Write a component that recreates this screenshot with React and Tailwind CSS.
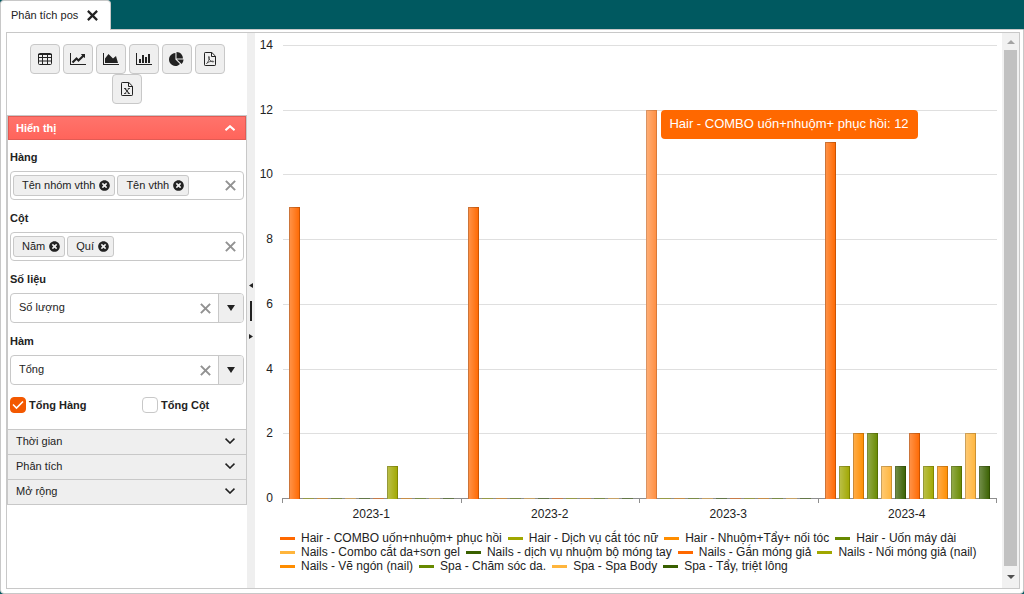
import { useState } from 'react';
import { FaTimesCircle } from 'react-icons/fa';

const SERIES = [
  { name: 'Hair - COMBO uốn+nhuộm+ phục hồi', color: '#ff6800', values: [9, 9, 12, 11] },
  { name: 'Hair - Dịch vụ cắt tóc nữ', color: '#a0a700', values: [0, 0, 0, 1] },
  { name: 'Hair - Nhuộm+Tẩy+ nối tóc', color: '#ff8d00', values: [0, 0, 0, 2] },
  { name: 'Hair - Uốn máy dài', color: '#678900', values: [0, 0, 0, 2] },
  { name: 'Nails - Combo cắt da+sơn gel', color: '#ffb53c', values: [0, 0, 0, 1] },
  { name: 'Nails - dịch vụ nhuộm bộ móng tay', color: '#396000', values: [0, 0, 0, 1] },
  { name: 'Nails - Gắn móng giả', color: '#ff6800', values: [0, 0, 0, 2] },
  { name: 'Nails - Nối móng giả (nail)', color: '#a0a700', values: [1, 0, 0, 1] },
  { name: 'Nails - Vẽ ngón (nail)', color: '#ff8d00', values: [0, 0, 0, 1] },
  { name: 'Spa - Chăm sóc da.', color: '#678900', values: [0, 0, 0, 1] },
  { name: 'Spa - Spa Body', color: '#ffb53c', values: [0, 0, 0, 2] },
  { name: 'Spa - Tẩy, triệt lông', color: '#396000', values: [0, 0, 0, 1] },
];
const PERIODS = ['2023-1', '2023-2', '2023-3', '2023-4'];
const TICKS = [0, 2, 4, 6, 8, 10, 12, 14];

// plot area inside the svg
const LEFT = 28;
const RIGHT = 742;
const TOP = 12;
const BOTTOM = 465;
const GROUP = (RIGHT - LEFT) / PERIODS.length;
const yOf = v => Math.round(BOTTOM - (v / 14) * (BOTTOM - TOP));

const TableIcon = () => (
  <svg width="14" height="12" viewBox="0 0 14 12">
    <rect x="0.5" y="0.5" width="13" height="11" rx="1" fill="none" stroke="currentColor" />
    <path fill="none" stroke="currentColor" d="M0 1.500h14M0 4.500h14M0 8h14M4.500 1v11M9.500 1v11" />
  </svg>
);

const LineIcon = () => (
  <svg width="16" height="14" viewBox="0 0 2048 1792">
    <path fill="currentColor" d="M2048 1536v128H0V128h128v1408h1920zM1920 288v435q0 21-19.500 29.500t-35.500-7.500l-121-121-633 633q-10 10-23 10t-23-10l-233-233-416 416-192-192 585-585q10-10 23-10t23 10l233 233 464-464-121-121q-16-16-7.500-35.500t29.500-19.500h435q14 0 23 9t9 23z" />
  </svg>
);

const AreaIcon = () => (
  <svg width="16" height="14" viewBox="0 0 2048 1792">
    <path fill="currentColor" d="M2048 1536v128H0V128h128v1408h1920zM1664 512l256 896H256V832l448-576 576 576z" />
  </svg>
);

const BarIcon = () => (
  <svg width="16" height="14" viewBox="0 0 2048 1792">
    <path fill="currentColor" d="M640 896v512H384V896h256zm384-512v1024H768V384h256zm1024 1152v128H0V128h128v1408h1920zM1408 640v768h-256V640h256zm384-384v1152h-256V256h256z" />
  </svg>
);

const PieIcon = () => (
  <svg width="15" height="15" viewBox="0 0 1792 1792">
    <path fill="currentColor" d="M768 890l546 546q-106 108-247.500 168T768 1664q-209 0-385.500-103T103 1281.500 0 896t103-385.500T382.500 231 768 128v762zm187 6h773q0 157-60 298.500T1500 1442zm709-128H896V0q209 0 385.500 103T1561 382.500 1664 768z" />
  </svg>
);

const FileIcon = ({ children }) => (
  <svg width="12" height="14" viewBox="0 0 12 14" fill="none" stroke="currentColor">
    <path d="M.5 1.200a.7.7 0 0 1 .7-.7h6.600l3.700 3.700v8.600a.7.7 0 0 1-.7.7H1.200a.7.7 0 0 1-.7-.7zM7.500.5v4h4" />
    {children}
  </svg>
);

const Cross = ({ size = 11, width = 1.8 }) => (
  <svg width={size} height={size} viewBox="0 0 10 10" fill="none" stroke="currentColor" strokeWidth={width}>
    <path d="M.8.800l8.400 8.400M9.200.800L.8 9.200" />
  </svg>
);

const Chevron = ({ up }) => (
  <svg width="10" height="6" viewBox="0 0 10 6" fill="none" stroke="currentColor" strokeWidth={up ? 2 : 1.6}>
    <path d={up ? 'M.5 5.200L5 1.200l4.500 4' : 'M.5.700L5 5l4.500-4.300'} />
  </svg>
);

const TOOLS = [
  { label: 'Bảng', icon: <TableIcon /> },
  { label: 'Biểu đồ đường', icon: <LineIcon /> },
  { label: 'Biểu đồ vùng', icon: <AreaIcon /> },
  { label: 'Biểu đồ cột', icon: <BarIcon /> },
  { label: 'Biểu đồ tròn', icon: <PieIcon /> },
  {
    label: 'Xuất PDF',
    icon: (
      <FileIcon>
        <path strokeWidth="0.7" d="M2.500 11.500C4 10.500 5.300 7.500 5.300 5c0-.8-.8-.8-.7 0 .2 2.500 2 4.500 4.400 5 1 .1.900-.9-.1-.9-2 0-4.500.700-6.400 2.400z" />
      </FileIcon>
    ),
  },
  {
    label: 'Xuất Excel',
    icon: (
      <FileIcon>
        <path strokeWidth="1.200" d="M4 6.500l4 5" />
        <path strokeWidth="0.8" d="M8 6.500l-4 5M3 6.500h2.200M6.800 6.500H9M3 11.500h2.200M6.800 11.500H9" />
      </FileIcon>
    ),
  },
];

function TagField({ id, label, tags }) {
  return (
    <div>
      <label htmlFor={id} className="block h-8 pt-[10px] leading-4 font-bold">{label}</label>
      <div className="flex h-[29px] items-center gap-[2px] rounded-[4px] border border-[#c8c8c8] bg-white pl-[2px] pr-[7px]">
        {tags.map(t => (
          <span key={t} className="flex h-[21px] shrink-0 items-center gap-1 rounded-[3px] border border-[#c8c8c8] bg-[#efefef] pr-1 pb-px pl-2">
            {t}
            <button type="button" aria-label={`Bỏ ${t}`}><FaTimesCircle size={11} /></button>
          </span>
        ))}
        <input id={id} type="text" className="h-5 w-0 min-w-0 flex-1 outline-none" />
        <button type="button" aria-label="Xóa" className="text-[#929292]"><Cross /></button>
      </div>
    </div>
  );
}

function SelectField({ id, label, value }) {
  return (
    <div>
      <label htmlFor={id} className="block h-8 pt-[10px] leading-4 font-bold">{label}</label>
      <div className="flex h-[30px] items-stretch overflow-hidden rounded-[4px] border border-[#c8c8c8] bg-white">
        <select id={id} className="min-w-0 flex-1 appearance-none pb-[2px] pl-2 outline-none">
          <option>{value}</option>
        </select>
        <button type="button" aria-label="Xóa" className="px-[7px] text-[#929292]"><Cross /></button>
        <button type="button" aria-label="Mở" className="flex w-[25px] items-center justify-center border-l border-[#c8c8c8] bg-[#efefef]">
          <svg width="8" height="6" viewBox="0 0 8 6"><path fill="currentColor" d="M0 0h8L4 6z" /></svg>
        </button>
      </div>
    </div>
  );
}

function CheckField({ label, checked, onChange }) {
  return (
    <label className="flex items-center gap-[3px] font-bold">
      <span className="relative flex h-4 w-4">
        <input
          type="checkbox"
          checked={checked}
          onChange={e => onChange(e.target.checked)}
          className="h-4 w-4 appearance-none rounded-[4px] border border-[#c8c8c8] bg-white checked:border-[#f35800] checked:bg-[#f35800]"
        />
        {checked && (
          <svg className="pointer-events-none absolute inset-0" width="16" height="16" viewBox="0 0 16 16" fill="none" stroke="#fff" strokeWidth="1.600">
            <path d="M3 7.500l3.500 3.500L13 4.500" />
          </svg>
        )}
      </span>
      {label}
    </label>
  );
}

function Sidebar() {
  const [open, setOpen] = useState(true);
  const [sumRow, setSumRow] = useState(true);
  const [sumCol, setSumCol] = useState(false);

  return (
    <aside className="w-[240px] shrink-0">
      <div className="flex flex-wrap justify-center gap-x-[3px] px-4 py-[11px]">
        {TOOLS.map(t => (
          <button
            key={t.label}
            type="button"
            aria-label={t.label}
            className="flex h-[30px] w-[30px] items-center justify-center rounded-[4px] border border-[#c8c8c8] bg-[#efefef]"
          >
            {t.icon}
          </button>
        ))}
      </div>

      <div className="border border-[#c8c8c8]">
        <button
          type="button"
          onClick={() => setOpen(!open)}
          className="flex h-6 w-full items-center justify-between border border-[#e25b54] bg-linear-to-b from-[#ff736b] to-[#ff645b] pr-[10px] pb-px pl-[7px] font-bold text-white"
        >
          Hiển thị <Chevron up={open} />
        </button>
        {open && (
          <div className="-mt-px px-[2px] pb-4">
            <TagField id="rows" label="Hàng" tags={['Tên nhóm vthh', 'Tên vthh']} />
            <TagField id="cols" label="Cột" tags={['Năm', 'Quí']} />
            <SelectField id="measure" label="Số liệu" value="Số lượng" />
            <SelectField id="func" label="Hàm" value="Tổng" />
            <div className="grid grid-cols-[132px_1fr] pt-3">
              <CheckField label="Tổng Hàng" checked={sumRow} onChange={setSumRow} />
              <CheckField label="Tổng Cột" checked={sumCol} onChange={setSumCol} />
            </div>
          </div>
        )}
        {['Thời gian', 'Phân tích', 'Mở rộng'].map(s => (
          <button
            key={s}
            type="button"
            className="flex h-[25px] w-full items-center justify-between border-t border-[#c8c8c8] bg-[#efefef] pr-[11px] pb-[2px] pl-2"
          >
            {s} <Chevron />
          </button>
        ))}
      </div>
    </aside>
  );
}

function Chart() {
  return (
    <svg viewBox="0 0 747 498" className="block w-full" fontFamily="'Liberation Sans', Arial, sans-serif" fontSize="12" fill="#222">
      <defs>
        <linearGradient id="shine" x1="0" x2="1" y1="0" y2="0">
          <stop offset="0" stopColor="#fff" stopOpacity="0.3" />
          <stop offset="1" stopColor="#fff" stopOpacity="0" />
        </linearGradient>
      </defs>

      {TICKS.map(t => (
        <g key={t}>
          {t > 0 && <rect x={LEFT} y={yOf(t)} width={RIGHT - LEFT} height="1" fill="#dfdfdf" />}
          <text x="18" y={yOf(t) + 4} textAnchor="end">{t}</text>
        </g>
      ))}

      <g shapeRendering="crispEdges">
        <rect x={LEFT - 1} y={BOTTOM} width={RIGHT - LEFT + 1} height="1" fill="#8e8e8e" />
        {[0, 1, 2, 3, 4].map(i => (
          <rect key={i} x={Math.round(LEFT + i * GROUP) - 1} y={BOTTOM} width="1" height="5" fill="#8e8e8e" />
        ))}
        {PERIODS.map((p, g) =>
          SERIES.map((s, i) => {
            const x = Math.round(LEFT + g * GROUP) + 6 + i * 14;
            const v = s.values[g];
            const y = yOf(v);
            const hovered = g === 2 && i === 0;
            if (v === 0) return <rect key={p + i} x={x} y={BOTTOM} width="11" height="1" fill={s.color} opacity="0.5" />;
            return (
              <g key={p + i}>
                <rect x={x} y={y} width="11" height={BOTTOM + 1 - y} fill={s.color} />
                <rect x={x} y={y} width="11" height={BOTTOM + 1 - y} fill="url(#shine)" />
                {hovered && <rect x={x} y={y} width="11" height={BOTTOM + 1 - y} fill="#fff" opacity="0.25" />}
                <path d={`M${x + 0.5} ${BOTTOM + 1}V${y + 0.5}h10V${BOTTOM + 1}`} fill="none" stroke="#000" strokeOpacity={hovered ? 0.15 : 0.2} />
              </g>
            );
          })
        )}
      </g>

      {PERIODS.map((p, g) => (
        <text key={p} x={LEFT + (g + 0.5) * GROUP - 1} y="485" textAnchor="middle">{p}</text>
      ))}

      <rect x="406" y="77" width="257" height="29" rx="4" fill="#ff6800" />
      <text x="534" y="95" textAnchor="middle" fill="#fff" fontSize="13">Hair - COMBO uốn+nhuộm+ phục hồi: 12</text>
    </svg>
  );
}

export default function App() {
  return (
    <div className="flex min-h-screen flex-col bg-[#005960] font-['Liberation_Sans',Arial,sans-serif] text-[11px] leading-4 text-[#222]">
      <header className="flex h-[29px] items-end">
        <div className="z-10 -mb-px flex h-[30px] items-center gap-[9px] rounded-t-[4px] border border-b-0 border-[#c8c8c8] bg-white pr-3 pb-[2px] pl-[10px]">
          <a href="#pos">Phân tích pos</a>
          <button type="button" aria-label="Đóng" className="pt-px"><Cross size={11} width={2} /></button>
        </div>
      </header>

      <main className="flex flex-1 rounded-b-[4px] border border-[#c8c8c8] bg-white pt-[2px] pr-[3px] pb-1 pl-[5px]">
        <div className="flex min-w-0 flex-1 border border-[#c8c8c8]">
          <Sidebar />

          <div className="flex w-2 shrink-0 flex-col items-center justify-center gap-[13px] bg-[#efefef]">
            <svg width="4" height="5" viewBox="0 0 4 5"><path fill="#222" d="M4 0v5L0 2.500z" /></svg>
            <span className="h-5 w-[2px] bg-[#222]" />
            <svg width="4" height="5" viewBox="0 0 4 5"><path fill="#222" d="M0 0v5l4-2.500z" /></svg>
          </div>

          <section className="min-w-0 flex-1">
            <Chart />
            <ul className="flex flex-wrap gap-x-[6px] pl-[25px] text-[12px] leading-[14px]">
              {SERIES.map(s => (
                <li key={s.name} className="flex items-center gap-[6px]">
                  <span className="h-[3px] w-[15px]" style={{ backgroundColor: s.color }} />
                  {s.name}
                </li>
              ))}
            </ul>
          </section>

          <div className="flex w-[17px] shrink-0 flex-col items-center bg-[#f1f1f1]">
            <span className="flex h-[17px] items-center">
              <svg width="8" height="4" viewBox="0 0 8 4"><path fill="#a3a3a3" d="M0 4h8L4 0z" /></svg>
            </span>
            <span className="w-[13px] flex-1 bg-[#c1c1c1]" />
            <span className="flex h-[22px] items-center">
              <svg width="8" height="4" viewBox="0 0 8 4"><path fill="#505050" d="M0 0h8L4 4z" /></svg>
            </span>
          </div>
        </div>
      </main>
    </div>
  );
}
